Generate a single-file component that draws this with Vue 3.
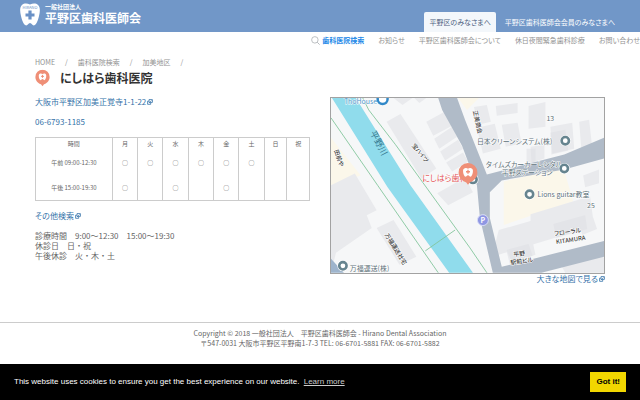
<script setup>
import { ref } from 'vue'

const nav = ['お知らせ', '平野区歯科医師会について', '休日夜間緊急歯科診療', 'お問い合わせ']
const days = ['月', '火', '水', '木', '金', '土', '日', '祝']
const hours = [
  { label: '午前 09:00-12:30', open: [1, 1, 1, 1, 1, 1, 0, 0] },
  { label: '午後 15:00-19:30', open: [1, 0, 1, 0, 1, 0, 0, 0] },
]
const cookieOpen = ref(true)
</script>

<template>
  <div class="page">
    <svg class="defs" aria-hidden="true">
      <symbol id="ext" viewBox="0 0 12 12">
        <path d="M4 1.2h6.8v5.6H4zM3.6 4.4H1.2v6.2h6.2V7" fill="none" stroke="currentColor" stroke-width="1.6" />
        <path d="M4.500 7.500 9 3" fill="none" stroke="currentColor" stroke-width="1.300" />
      </symbol>
      <symbol id="pin" viewBox="0 0 20 23">
        <path d="M10 .5a9.5 9.5 0 0 0-9.5 9.5c0 5.500 4.500 9 7.500 9.800L10 22.500l2-2.700c3-.8 7.500-4.300 7.500-9.800A9.500 9.500 0 0 0 10 .5z" fill="#ef8f77" />
        <path d="M10 6.200c1.400-1.300 5-1.200 5 2.200 0 3.200-1.200 5.800-2.600 6-.9 0-1.100-1.600-2.400-1.600s-1.500 1.600-2.400 1.600c-1.400-.2-2.600-2.800-2.600-6 0-3.400 3.600-3.500 5-2.200z" fill="#fff" />
        <path d="M10 7.300v4M8 9.300h4" stroke="#ef8f77" stroke-width="1.300" />
      </symbol>
      <symbol id="place" viewBox="0 0 12 12">
        <circle cx="6" cy="6" r="5.600" fill="#fff" />
        <circle cx="6" cy="6" r="3.700" fill="#fff" stroke="#66848f" stroke-width="2.600" />
      </symbol>
    </svg>

    <header class="top">
      <a class="brand" href="#">
        <svg class="tooth" viewBox="0 0 20 23" aria-hidden="true">
          <path d="M10 1.500C13 .2 16 .2 18 2c2.600 2.500 2 7 1 11-.9 4-2.500 8.500-4.500 9.300-2.300.8-2.500-2.300-4.500-2.300s-2.200 3.100-4.500 2.300C3.500 21.500 1.900 17 1 13 0 9-.6 4.500 2 2c2-1.800 5-1.800 8-.5z" fill="#fff" />
          <path d="M10 7.500v9M5.500 12h9" stroke="#6a91c6" stroke-width="3.200" />
          <text x="10" y="6" text-anchor="middle" font-size="4" fill="#6a91c6">HIRANO</text>
        </svg>
        <span class="brand-text">
          <small>一般社団法人</small>
          <strong>平野区歯科医師会</strong>
        </span>
      </a>
      <nav class="tabs" aria-label="対象">
        <a class="tab active" href="#">平野区のみなさまへ</a>
        <a class="tab" href="#">平野区歯科医師会会員のみなさまへ</a>
      </nav>
    </header>

    <nav class="menu">
      <a class="current" href="#">
        <svg viewBox="0 0 10 10" aria-hidden="true">
          <circle cx="4.300" cy="4.300" r="3.600" fill="none" stroke="#a4a8ad" stroke-width=".8" />
          <path d="m7 7 2.600 2.600" stroke="#a4a8ad" stroke-width=".9" />
        </svg>
        歯科医院検索
      </a>
      <a v-for="n in nav" :key="n" href="#">{{ n }}</a>
    </nav>

    <main>
      <nav class="crumbs">
        <a href="#">HOME</a><span>/</span><a href="#">歯科医院検索</a><span>/</span><a href="#">加美地区</a><span>/</span>
      </nav>
      <div class="title">
        <svg viewBox="0 0 20 23" aria-hidden="true"><use href="#pin" /></svg>
        <h1>にしはら歯科医院</h1>
      </div>
      <div class="columns">
        <section class="info">
          <p><a class="link" href="#">大阪市平野区加美正覚寺1-1-22<svg class="ext"><use href="#ext" /></svg></a></p>
          <p class="tel"><a class="link" href="#">06-6793-1185</a></p>
          <table>
            <thead>
              <tr>
                <th class="time" scope="col">時間</th>
                <th v-for="d in days" :key="d" scope="col">{{ d }}</th>
              </tr>
            </thead>
            <tbody>
              <tr v-for="h in hours" :key="h.label">
                <th scope="row">{{ h.label }}</th>
                <td v-for="(o, i) in h.open" :key="i">{{ o ? '○' : '' }}</td>
              </tr>
            </tbody>
          </table>
          <p class="other"><a class="link" href="#">その他検索<svg class="ext"><use href="#ext" /></svg></a></p>
          <p class="notes">診療時間　9:00～12:30　15:00～19:30<br>休診日　日・祝<br>午後休診　火・木・土</p>
        </section>

        <section class="map">
          <svg viewBox="0 0 275 176" role="img" aria-label="地図">
            <rect width="275" height="176" fill="#f6f7f8" />
            <g fill="#fbf7ea">
              <path d="M0 40 30 78 0 88zM128 0h21l-12 12zM174 84l60-14 10 34-70 24z" />
            </g>
            <g fill="#e9eaed">
              <path d="m0 88 24-12 22 37-10 5 5 13L5 156l-5 20z" />
              <path d="m56 24 14-8 36 55-15 10z" />
              <path d="m96 24 18-10 8 14-19 10zM104 41l18-12 5 10-18 12zM110 54l18-12 5 9-18 12zM116 65l17-10 5 9-16 10z" />
              <path d="m46 131 17-8 23 37-17 8z" />
              <path d="M63 0h19l-10 7zM84 0h12l-7 5z" />
              <path d="m144 9 13-2 4 17-13 3zM147 30l18-4 6 25-18 5zM166 8l22-3v10l-21 3zM172 27l16-2 4 21-16 3zM199 8l17-4v25l-17 2zM221 29l22-4 2 26-22 5zM250 24l10-2 4 36-11 4zM201 49l14-2v14l-13 4zM254 78l16-6v14l-14 4z" />
              <path d="m169 133 32-9v-7l60-18 4 30-103 31z" />
              <path d="m176 151 27-7 3 14-26 9z" />
              <path d="m236 176-4-7 38-12 5 4v15zM107 96l28-16 8 15-25 13zM250 125l14-5 4 12-15 6z" />
            </g>
            <g fill="#dedfe4" opacity=".5">
              <path d="m177 153 22-6 4 12-21 6zM224 127l32-9 2 14-31 9z" />
              <path d="M197 51h9v14l-9 2zM221 35l15-3 3 21-17 4z" />
            </g>
            <path d="M108 0h19l8 22 22 55 78-20 40-17v21l-40 11-63 11-12 12v26l12 49 103-26v16l-63 16h-49l-13-55-3-33-15-40-20-36z" fill="#b0bbc8" />
            <path d="M1 0h24l55 88 63 88h-24L57 90z" fill="#90dcec" />
            <path d="m0 20 47 68 61 88M32 0l6 12 27 35 75 104 17 25M95 154l30-21" fill="none" stroke="#83c69c" stroke-width=".9" />
            <path d="m0 162 13 14H0z" fill="#9eb4cc" />
            <use href="#place" x="137" y="76" width="12" height="12" />
            <g class="label">
              <text x="13" y="6" fill="#4d94c8">ThoHouse</text>
              <text class="river" transform="translate(39 35) rotate(62)">平野川</text>
              <g class="dark">
                <text transform="translate(81 48) rotate(50)">宝ハイツ</text>
                <text transform="translate(54 138) rotate(58)">万福運送社宅</text>
                <text transform="translate(143 13) rotate(78)">正美商会</text>
                <text transform="translate(3 53) rotate(70)">田前や</text>
                <text transform="translate(184 160) rotate(-8)">平野</text>
                <text transform="translate(181 168) rotate(-8)">駅前ビル</text>
                <text transform="translate(225 139) rotate(-8)">フローラル</text>
                <text transform="translate(227 147) rotate(-8)">KITAMURA</text>
              </g>
              <text x="217" y="23">13</text>
              <text x="258" y="111">25</text>
              <text x="147" y="46">日本クリーンシステム(株)</text>
              <text x="156" y="70">タイムズカーカーレンタル</text>
              <text x="172" y="78">平野ステーション</text>
              <text x="208" y="100">Lions guitar教室</text>
              <text x="19" y="174">万福運送(株)</text>
              <text class="pinlabel" x="92" y="84">にしはら歯科</text>
            </g>
            <use href="#place" x="230" y="37" width="12" height="12" />
            <use href="#place" x="229" y="65" width="12" height="12" />
            <use href="#place" x="194" y="91" width="12" height="12" />
            <use href="#place" x="6" y="163" width="12" height="12" />
            <circle cx="52" cy="1" r="5" fill="#fff" stroke="#3189c9" stroke-width="2.500" />
            <circle cx="153" cy="123" r="5.500" fill="#8f97e3" stroke="#d8dcf7" />
            <text x="153" y="126" text-anchor="middle" font-size="7" font-weight="700" fill="#fff">P</text>
            <use href="#pin" x="128" y="65" width="20" height="23" />
          </svg>
          <a class="link" href="#">大きな地図で見る<svg class="ext"><use href="#ext" /></svg></a>
        </section>
      </div>
    </main>

    <footer>
      <p>Copyright © 2018 一般社団法人　平野区歯科医師会 - Hirano Dental Association</p>
      <p>〒547-0031 大阪市平野区平野南1-7-3 TEL: 06-6701-5881 FAX: 06-6701-5882</p>
    </footer>

    <aside v-if="cookieOpen" class="cookie">
      <p>This website uses cookies to ensure you get the best experience on our website. <a href="#">Learn more</a></p>
      <button type="button" @click="cookieOpen = false">Got it!</button>
    </aside>
  </div>
</template>

<style>
body {
  background: #fff;
}
</style>

<style scoped>
.page {
  font-family: "Noto Sans CJK JP", "Noto Sans", sans-serif;
  font-size: 8px;
  line-height: 10px;
  color: #666;
}
.defs {
  position: absolute;
  width: 0;
  height: 0;
}
p, h1 {
  margin: 0;
}
a {
  color: inherit;
  text-decoration: none;
}
.top {
  display: flex;
  justify-content: space-between;
  align-items: flex-end;
  height: 32px;
  padding: 0 20px;
  background: #7197c8;
  color: #fff;
}
.brand {
  display: flex;
  align-items: center;
  align-self: flex-start;
  gap: 5px;
  height: 28px;
}
.tooth {
  width: 20px;
  height: 23px;
}
.brand-text {
  display: flex;
  flex-direction: column;
}
.brand small {
  font-size: 6px;
  line-height: 8px;
  font-weight: 700;
}
.brand strong {
  font-size: 12px;
  line-height: 14px;
}
.tabs {
  display: flex;
  gap: 4px;
  font-size: 7px;
  font-feature-settings: "palt";
}
.tab {
  padding: 5px 5px;
  white-space: nowrap;
}
.tab.active {
  background: #f3f7fb;
  color: #4d6180;
  border-radius: 2px 2px 0 0;
}
.menu {
  display: flex;
  justify-content: flex-end;
  gap: 14px;
  padding-top: 3px;
  font-size: 7px;
  color: #929292;
  white-space: nowrap;
  font-feature-settings: "palt";
}
.menu a {
  display: flex;
  align-items: center;
  gap: 2px;
}
.menu svg {
  width: 9px;
  height: 9px;
}
.menu .current {
  color: #2489e8;
  font-weight: 700;
}
main {
  padding: 12px 35px 0;
}
.crumbs {
  display: flex;
  gap: 10px;
  font-size: 7px;
  color: #929292;
}
.title {
  display: flex;
  align-items: center;
  gap: 10px;
  margin-top: 2px;
}
.title svg {
  width: 15px;
  height: 18px;
}
h1 {
  font-size: 12px;
  line-height: 18px;
  color: #333;
  font-feature-settings: "palt";
}
.columns {
  display: grid;
  grid-template-columns: 1fr 1fr;
  gap: 20px;
  margin-top: 10px;
}
.link {
  color: #3371a8;
  font-feature-settings: "palt";
}
.ext {
  width: 6px;
  height: 6px;
  margin-left: 1px;
}
.tel {
  margin-top: 10px;
}
table {
  width: 100%;
  margin-top: 10px;
  border: 1px solid #ccc;
  border-collapse: collapse;
  table-layout: fixed;
  font-size: 6px;
  line-height: 8px;
  text-align: center;
}
th, td {
  height: 25px;
  padding: 0;
  border-left: 1px solid #ccc;
  font-weight: 400;
}
thead th {
  width: 9%;
  height: 12px;
}
thead th:nth-last-child(-n + 2) {
  width: 8%;
}
thead .time {
  width: 28%;
}
tbody th {
  font-size: 6px;
  font-feature-settings: "palt";
}
.other {
  margin-top: 10px;
}
.notes {
  margin-top: 10px;
}
.map {
  display: flex;
  flex-direction: column;
  align-items: flex-end;
}
.map > svg {
  display: block;
  width: 100%;
  box-sizing: border-box;
  border: 1px solid #a2a2a2;
}
.label {
  font-size: 7px;
  fill: #5c7078;
  paint-order: stroke;
  stroke: #fff;
  stroke-width: 1px;
  font-feature-settings: "palt";
}
.label .river {
  font-size: 9px;
  fill: #33758c;
  stroke: none;
}
.dark {
  font-size: 6px;
  font-weight: 500;
  fill: #3c3c3c;
}
.label .pinlabel {
  fill: #e25254;
  font-size: 8px;
}
footer {
  margin-top: 38px;
  padding: 5px 0 54px;
  border-top: 1px solid #ccc;
  font-size: 7px;
  text-align: center;
}
.cookie {
  position: fixed;
  inset: auto 0 0;
  display: flex;
  align-items: center;
  justify-content: space-between;
  padding: 8px 14px;
  background: #000;
  color: #fff;
  font-family: "Liberation Sans", Arial, sans-serif;
}
.cookie a {
  margin-left: 2px;
  color: #ccc;
  text-decoration: underline;
}
.cookie button {
  padding: 5px 6px;
  border: 0;
  background: #f1d600;
  color: #000;
  font: 700 8px/10px "Liberation Sans", Arial, sans-serif;
}
</style>
